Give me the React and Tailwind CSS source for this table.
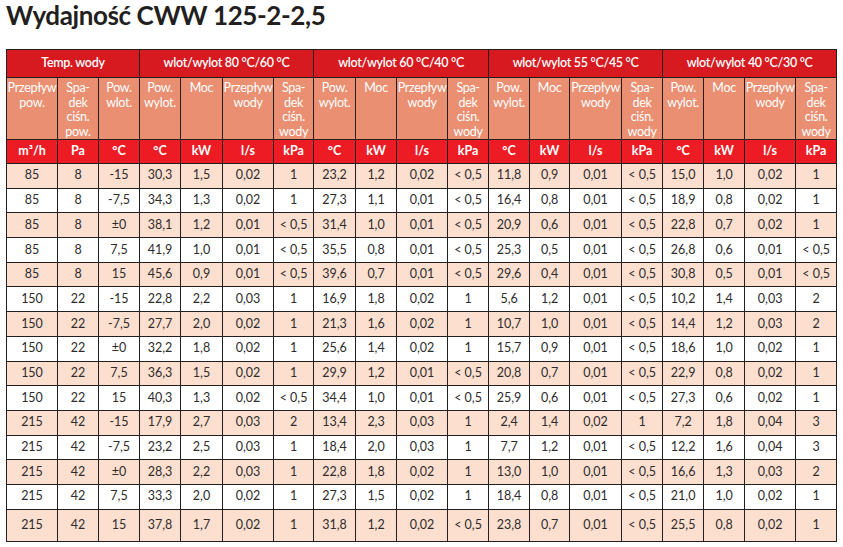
import React from 'react'

const colWidths = [51, 41, 41, 41, 42, 51, 40, 42, 41, 51, 41, 41, 40, 52, 41, 41, 41, 51, 41]

const groups = [
  { label: 'Temp. wody', span: 3 },
  { label: 'wlot/wylot 80 °C/60 °C', span: 4 },
  { label: 'wlot/wylot 60 °C/40 °C', span: 4 },
  { label: 'wlot/wylot 55 °C/45 °C', span: 4 },
  { label: 'wlot/wylot 40 °C/30 °C', span: 4 }
]

const groupCols = [
  ['Pow.', 'wylot.'],
  ['Moc'],
  ['Przepływ', 'wody'],
  ['Spa-', 'dek', 'ciśn.', 'wody']
]

const subHeaders = [
  ['Przepływ', 'pow.'],
  ['Spa-', 'dek', 'ciśn.', 'pow.'],
  ['Pow.', 'wlot.'],
  ...groupCols,
  ...groupCols,
  ...groupCols,
  ...groupCols
]

const units = ['m³/h', 'Pa', '°C', ...Array(4).fill(['°C', 'kW', 'l/s', 'kPa']).flat()]

const rows = [
  ['85', '8', '-15', '30,3', '1,5', '0,02', '1', '23,2', '1,2', '0,02', '< 0,5', '11,8', '0,9', '0,01', '< 0,5', '15,0', '1,0', '0,02', '1'],
  ['85', '8', '-7,5', '34,3', '1,3', '0,02', '1', '27,3', '1,1', '0,01', '< 0,5', '16,4', '0,8', '0,01', '< 0,5', '18,9', '0,8', '0,02', '1'],
  ['85', '8', '±0', '38,1', '1,2', '0,01', '< 0,5', '31,4', '1,0', '0,01', '< 0,5', '20,9', '0,6', '0,01', '< 0,5', '22,8', '0,7', '0,02', '1'],
  ['85', '8', '7,5', '41,9', '1,0', '0,01', '< 0,5', '35,5', '0,8', '0,01', '< 0,5', '25,3', '0,5', '0,01', '< 0,5', '26,8', '0,6', '0,01', '< 0,5'],
  ['85', '8', '15', '45,6', '0,9', '0,01', '< 0,5', '39,6', '0,7', '0,01', '< 0,5', '29,6', '0,4', '0,01', '< 0,5', '30,8', '0,5', '0,01', '< 0,5'],
  ['150', '22', '-15', '22,8', '2,2', '0,03', '1', '16,9', '1,8', '0,02', '1', '5,6', '1,2', '0,01', '< 0,5', '10,2', '1,4', '0,03', '2'],
  ['150', '22', '-7,5', '27,7', '2,0', '0,02', '1', '21,3', '1,6', '0,02', '1', '10,7', '1,0', '0,01', '< 0,5', '14,4', '1,2', '0,03', '2'],
  ['150', '22', '±0', '32,2', '1,8', '0,02', '1', '25,6', '1,4', '0,02', '1', '15,7', '0,9', '0,01', '< 0,5', '18,6', '1,0', '0,02', '1'],
  ['150', '22', '7,5', '36,3', '1,5', '0,02', '1', '29,9', '1,2', '0,01', '< 0,5', '20,8', '0,7', '0,01', '< 0,5', '22,9', '0,8', '0,02', '1'],
  ['150', '22', '15', '40,3', '1,3', '0,02', '< 0,5', '34,4', '1,0', '0,01', '< 0,5', '25,9', '0,6', '0,01', '< 0,5', '27,3', '0,6', '0,02', '1'],
  ['215', '42', '-15', '17,9', '2,7', '0,03', '2', '13,4', '2,3', '0,03', '1', '2,4', '1,4', '0,02', '1', '7,2', '1,8', '0,04', '3'],
  ['215', '42', '-7,5', '23,2', '2,5', '0,03', '1', '18,4', '2,0', '0,03', '1', '7,7', '1,2', '0,01', '< 0,5', '12,2', '1,6', '0,04', '3'],
  ['215', '42', '±0', '28,3', '2,2', '0,03', '1', '22,8', '1,8', '0,02', '1', '13,0', '1,0', '0,01', '< 0,5', '16,6', '1,3', '0,03', '2'],
  ['215', '42', '7,5', '33,3', '2,0', '0,02', '1', '27,3', '1,5', '0,02', '1', '18,4', '0,8', '0,01', '< 0,5', '21,0', '1,0', '0,02', '1'],
  ['215', '42', '15', '37,8', '1,7', '0,02', '1', '31,8', '1,2', '0,02', '< 0,5', '23,8', '0,7', '0,01', '< 0,5', '25,5', '0,8', '0,02', '1']
]

const cell = 'border border-[#231f20] p-0 text-center'

export default function App() {
  return (
    <div className="min-h-[547px] w-[843px] bg-white font-['Lato',sans-serif] text-[#2e2b2c]">
      <h1 className="pl-[6px] text-[26px] font-bold leading-[30px] tracking-[-0.4px] text-[#231f20]">
        Wydajność CWW 125-2-2,5
      </h1>

      <table className="ml-[6px] mt-[19px] w-[831px] table-fixed border-collapse border border-[#231f20]">
        <colgroup>
          {colWidths.map((w, i) => (
            <col key={i} style={{ width: w }} />
          ))}
        </colgroup>
        <thead>
          {/* grupy temperatur */}
          <tr className="h-[28px] bg-[#d71920] text-[12.5px] tracking-[-0.3px] text-white">
            {groups.map((g) => (
              <th key={g.label} colSpan={g.span} className={`${cell} font-semibold`}>
                {g.label}
              </th>
            ))}
          </tr>
          {/* nazwy kolumn */}
          <tr className="h-[62px] bg-[#ea8f72] text-[12.5px] leading-[14.5px] tracking-[-0.3px] text-white">
            {subHeaders.map((lines, i) => (
              <th key={i} className={`${cell} pt-[3px] align-top font-normal`}>
                {lines.map((l, j) => (
                  <div key={j}>{l}</div>
                ))}
              </th>
            ))}
          </tr>
          {/* jednostki */}
          <tr className="h-[24px] bg-[#ed1c24] text-[12.5px] text-white">
            {units.map((u, i) => (
              <th key={i} className={`${cell} font-bold`}>
                {u}
              </th>
            ))}
          </tr>
        </thead>
        <tbody className="text-[12.5px]">
          {rows.map((r, i) => (
            <tr
              key={i}
              className={`${i === rows.length - 1 ? 'h-[32px]' : 'h-[24.7px]'} ${
                i % 2 === 0 ? 'bg-[#fddfcf]' : 'bg-white'
              }`}
            >
              {r.map((v, j) => (
                <td key={j} className={cell}>
                  {v}
                </td>
              ))}
            </tr>
          ))}
        </tbody>
      </table>
    </div>
  )
}
